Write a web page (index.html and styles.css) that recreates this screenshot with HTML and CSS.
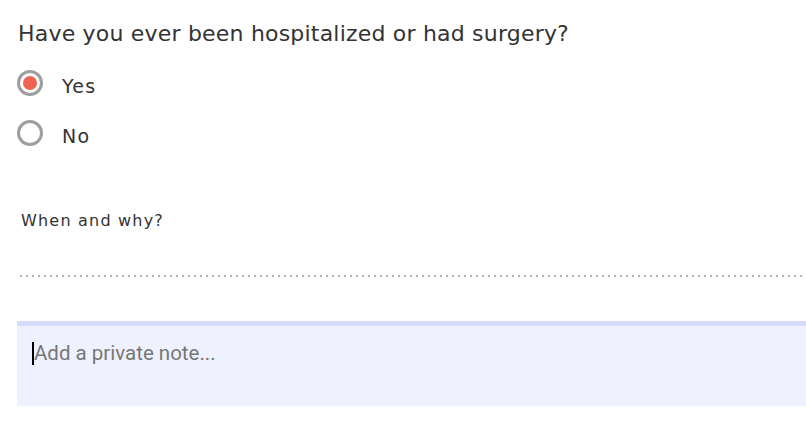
FILE: index.html
```html
<!DOCTYPE html>
<html lang="en">
<head>
  <meta charset="UTF-8" />
  <title>Medical history</title>
  <meta name="viewport" content="width=device-width, initial-scale=1" />
  <link rel="stylesheet" href="styles.css">
</head>
<body>

  <div id="container">
    <h2 class="question">Have you ever been hospitalized or had surgery?</h2>

    <div class="options">
      <label class="option">
        <span class="radio checked"></span>
        <span class="option-label">Yes</span>
      </label>
      <label class="option">
        <span class="radio"></span>
        <span class="option-label">No</span>
      </label>
    </div>

    <div class="followup">
      <div class="followup-label">When and why?</div>
      <div class="dotted-line"></div>
    </div>

    <div class="note">
      <div class="note-input"><span class="caret"></span><span class="placeholder">Add a private note...</span></div>
    </div>
  </div>

</body>
</html>
```

FILE: styles.css
```css
html, body {
  margin: 0;
  background: #fff;
  color: #333;
  font-family: 'DejaVu Sans', sans-serif;
}
#container {
  padding: 18px 0 0 17px;
}
.question {
  margin: 0 0 0 1px;
  font-size: 22px;
  font-weight: normal;
  letter-spacing: 0.2px;
  line-height: 32px;
  color: #333;
}
.options {
  margin-top: 15px;
}
.option {
  display: flex;
  align-items: center;
  height: 50px;
  cursor: pointer;
}
.option:first-child {
  margin-top: -7px;
}
.radio {
  width: 20px;
  height: 20px;
  border: 3px solid #9e9e9e;
  border-radius: 50%;
  display: flex;
  align-items: center;
  justify-content: center;
  box-sizing: content-box;
}
.radio.checked::after {
  content: '';
  width: 14px;
  height: 14px;
  border-radius: 50%;
  background: #ee6352;
}
.option-label {
  margin: 5px 0 0 19px;
  font-size: 19px;
  letter-spacing: 1.2px;
  color: #333;
}
.followup {
  margin-top: 53px;
}
.followup-label {
  margin-left: 4px;
  font-size: 16px;
  letter-spacing: 1.2px;
  color: #333;
}
.dotted-line {
  margin: 45px 0 0 3px;
  height: 2px;
  background: repeating-linear-gradient(to right, #b5b5b5 0 2px, transparent 2px 6px);
}
.note {
  margin-top: 44px;
  border-top: 5px solid #d6dcfb;
  background: #eff2fe;
  height: 80px;
}
.note-input {
  display: flex;
  align-items: center;
  padding: 15px 0 0 15px;
  font-family: Roboto, sans-serif;
  font-size: 20.5px;
}
.caret {
  width: 2px;
  height: 23px;
  background: #000;
}
.placeholder {
  color: #777;
}
```
